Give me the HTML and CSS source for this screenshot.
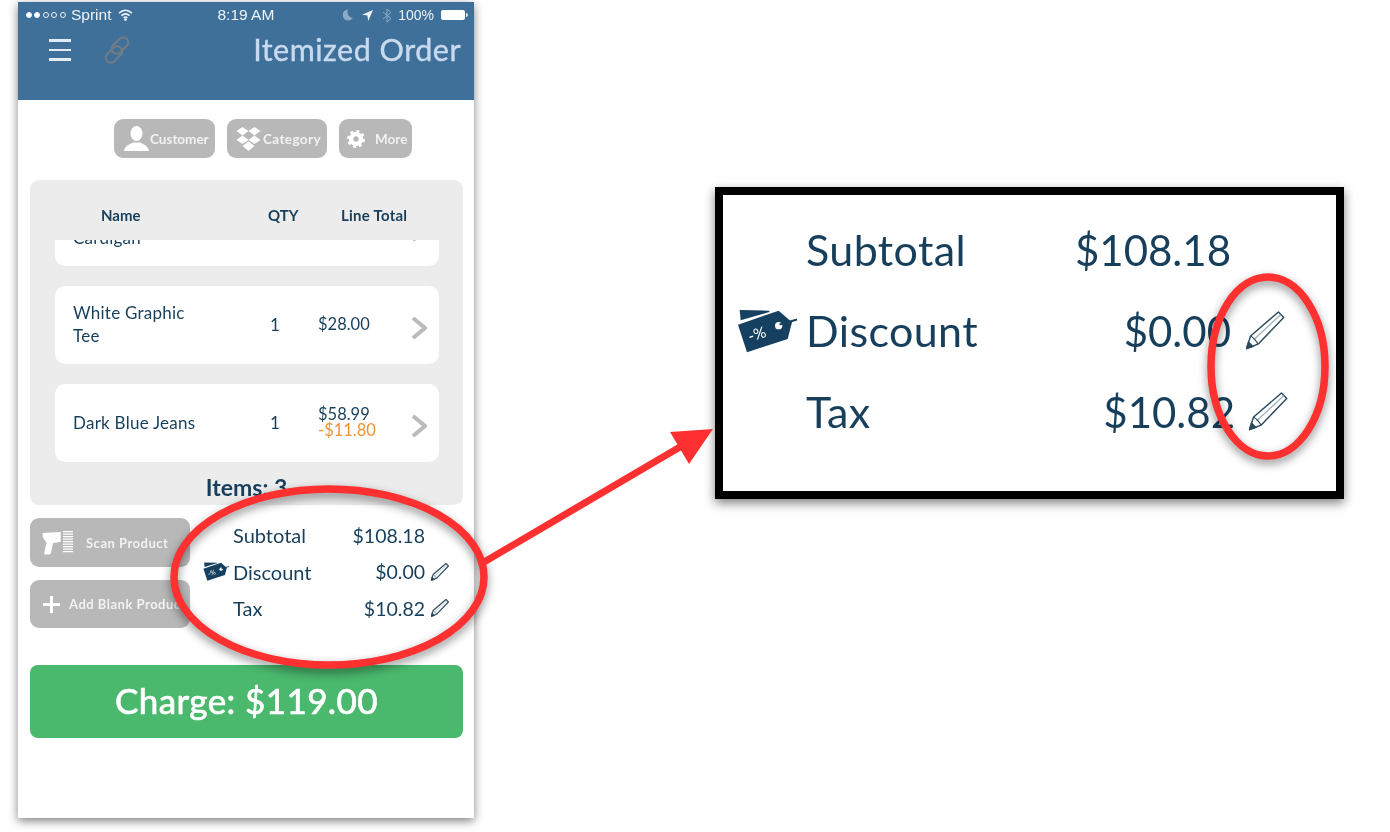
FILE: index.html
```html
<!DOCTYPE html>
<html lang="en">
<head>
    <meta charset="UTF-8">
    <title>Itemized Order</title>
    <link rel="stylesheet" href="styles.css">
</head>
<body>
    <svg class="defs" width="0" height="0">
        <symbol id="tag" viewBox="110 400 180 132">
            <path d="M118 403 L207 405 L207 409 L121 434 Z" fill="#16405f"/>
            <path d="M113 447 L235 405 L275 440 L262 490 L140 530 Z" fill="#16405f"/>
            <circle cx="235" cy="450" r="11" fill="#fff"/>
            <path d="M240 446 L288 432" stroke="#16405f" stroke-width="6" stroke-linecap="round"/>
            <text x="143" y="490" transform="rotate(-18 175 475)" font-family="Lato, sans-serif" font-size="46" fill="#fff">-%</text>
        </symbol>
        <symbol id="pencil" viewBox="0 0 40 40">
            <path d="M0.5 38.5 L4.7 25.7 L33.3 1 L38.7 6.7 L12.3 34 Z" fill="#fff" stroke="#2d4b5e" stroke-linejoin="round"/>
            <path d="M8 29.5 L35.5 3.8" stroke="#9fb0ba" stroke-width="1.3"/>
            <path d="M4.7 25.7 C7 27 10 30 12.3 34" fill="none" stroke="#2d4b5e" stroke-width="1.2"/>
            <path d="M0.5 38.5 L2.6 32 L7 36.4 Z" fill="#2d4b5e" stroke="#2d4b5e"/>
        </symbol>
        <symbol id="chevron" viewBox="0 0 16 24">
            <path d="M2 2 L14 12 L2 22" fill="none" stroke="#bbb" stroke-width="4"/>
        </symbol>
    </svg>

    <div class="phone">
        <header class="header">
            <div class="status">
                <div class="status-left">
                    <span class="dot on"></span><span class="dot on"></span><span class="dot"></span><span class="dot"></span><span class="dot"></span>
                    <span class="carrier">Sprint</span>
                    <svg width="15" height="12" viewBox="0 0 15 12" fill="none" stroke="#eef3f8" stroke-width="1.6">
                        <path d="M1 4.3 C5 0.4 10 0.4 14 4.3"/>
                        <path d="M3.4 6.7 C6 4.3 9 4.3 11.6 6.7"/>
                        <path d="M5.6 8.9 C6.8 7.8 8.2 7.8 9.4 8.9"/>
                        <circle cx="7.5" cy="10.6" r="0.6" fill="#eef3f8"/>
                    </svg>
                </div>
                <div class="status-time">8:19 AM</div>
                <div class="status-right">
                    <svg class="dim" width="10" height="12" viewBox="0 0 10 12"><path d="M5 0.5 A5.5 5.5 0 1 0 9.8 9 A6 6 0 0 1 5 0.5 Z" fill="#eef3f8"/></svg>
                    <svg width="11" height="11" viewBox="0 0 11 11"><path d="M11 0 L0 4.8 L5.4 5.6 L6.2 11 Z" fill="#eef3f8"/></svg>
                    <svg class="dim" width="10" height="15" viewBox="0 0 10 15" fill="none" stroke="#eef3f8" stroke-width="1"><path d="M1 4 L9 10.5 L5 14 L5 1 L9 4.5 L1 11"/></svg>
                    <span class="battery-text">100%</span>
                    <span class="battery"></span>
                </div>
            </div>
            <div class="nav">
                <span class="burger"><i></i><i></i><i></i></span>
                <svg class="chain" width="30" height="30" viewBox="0 0 30 30" fill="none" stroke="#6f7c85" stroke-width="2.2">
                    <rect x="13" y="1" width="10" height="19" rx="5" transform="rotate(45 18 10.5)"/>
                    <rect x="7" y="10" width="10" height="19" rx="5" transform="rotate(45 12 19.5)"/>
                </svg>
                <h1 class="title">Itemized Order</h1>
            </div>
        </header>

        <div class="tools">
            <div class="tool tool-customer">
                <svg width="25" height="25" viewBox="0 0 25 25" fill="#fff">
                    <ellipse cx="12.5" cy="7.5" rx="6" ry="7.5"/>
                    <path d="M0 25 C1 19 6 18.5 9 16.5 L16 16.5 C19 18.5 24 19 25 25 Z"/>
                </svg>
                <span>Customer</span>
            </div>
            <div class="tool tool-category">
                <svg width="25" height="24" viewBox="0 0 25 24" fill="#fff">
                    <path d="M6.5 0 L12.5 4 L6.5 8.5 L0.5 4 Z"/>
                    <path d="M18.5 0 L24.5 4 L18.5 8.5 L12.5 4 Z"/>
                    <path d="M6.5 8.5 L12.5 13 L6.5 17 L0.5 13 Z"/>
                    <path d="M18.5 8.5 L24.5 13 L18.5 17 L12.5 13 Z"/>
                    <path d="M12.5 14.5 L18.5 19 L12.5 24 L6.5 19 Z"/>
                </svg>
                <span>Category</span>
            </div>
            <div class="tool tool-more">
                <svg width="18" height="18" viewBox="0 0 20 20">
                    <circle cx="10" cy="10" r="8.2" fill="none" stroke="#fff" stroke-width="3.6" stroke-dasharray="3.2 3.24"/>
                    <circle cx="10" cy="10" r="5.5" fill="none" stroke="#fff" stroke-width="5"/>
                </svg>
                <span>More</span>
            </div>
        </div>

        <section class="panel">
            <div class="panel-head">
                <span class="head-name">Name</span>
                <span class="head-qty">QTY</span>
                <span class="head-total">Line Total</span>
            </div>
            <div class="list">
                <div class="item item-scrolled">
                    <div class="item-name">&nbsp;<br>Cardigan</div>
                    <div></div>
                    <div></div>
                    <div></div>
                    <svg class="chevron"><use href="#chevron"/></svg>
                </div>
                <div class="item">
                    <div class="item-name">White Graphic<br>Tee</div>
                    <div class="item-qty">1</div>
                    <div></div>
                    <div class="item-price">$28.00</div>
                    <svg class="chevron"><use href="#chevron"/></svg>
                </div>
                <div class="item">
                    <div class="item-name">Dark Blue Jeans</div>
                    <div class="item-qty">1</div>
                    <div></div>
                    <div class="item-price item-price-stack">$58.99<span class="item-off">-$11.80</span></div>
                    <svg class="chevron"><use href="#chevron"/></svg>
                </div>
            </div>
            <div class="count">Items: 3</div>
        </section>

        <div class="actions">
            <div class="action-btns">
                <div class="action">
                    <svg class="scan-icon" width="31" height="24" viewBox="0 0 31 24" fill="#fff">
                        <path d="M0.7 2 L18.7 1 L18.7 11 L11 12 L9 22 Q8.5 23.5 6 23.5 L3.5 23.5 Q2 23.5 2.2 22 L4.5 12 L0.7 6 Z"/>
                        <path d="M21 0h10v1.3H21zM21 2.5h10v1.3H21zM21 5h10v1.3H21zM21 7.5h10v1.3H21zM21 10h10v1.3H21zM21 12.500h10v1.300H21zM21 15h10v1.300H21zM21 17.500h10v1.300H21zM21 20h10v1.300H21z"/>
                    </svg>
                    <span class="scan-label">Scan Product</span>
                </div>
                <div class="action action-add">
                    <svg class="plus-icon" width="17" height="17" viewBox="0 0 17 17" fill="#fff"><path d="M7 0h3v7h7v3h-7v7H7v-7H0V7h7z"/></svg>
                    <span class="add-label">Add Blank Product</span>
                </div>
            </div>
            <div class="totals">
                <span></span><span class="lbl">Subtotal</span><span class="val">$108.18</span><span></span>
                <svg class="tag"><use href="#tag"/></svg><span class="lbl">Discount</span><span class="val">$0.00</span><svg class="pencil"><use href="#pencil"/></svg>
                <span></span><span class="lbl">Tax</span><span class="val">$10.82</span><svg class="pencil"><use href="#pencil"/></svg>
            </div>
        </div>

        <div class="charge">Charge: $119.00</div>
    </div>

    <div class="zoom-box">
        <div class="totals totals-big">
            <span></span><span class="lbl">Subtotal</span><span class="val">$108.18</span><span></span>
            <svg class="tag"><use href="#tag"/></svg><span class="lbl">Discount</span><span class="val">$0.00</span><svg class="pencil"><use href="#pencil"/></svg>
            <span></span><span class="lbl">Tax</span><span class="val val-tax">$10.82</span><svg class="pencil pencil-tax"><use href="#pencil"/></svg>
        </div>
    </div>

    <svg class="marks" width="1390" height="832" viewBox="0 0 1390 832">
        <ellipse class="ring" cx="329" cy="577" rx="155" ry="88"/>
        <ellipse class="ring" cx="1268" cy="366.5" rx="57" ry="89.5"/>
        <path d="M479 565 L680 447" stroke="#fe3030" stroke-width="7"/>
        <path d="M713 429 L670 432 L689 464 Z" fill="#fe3030"/>
    </svg>
</body>
</html>
```

FILE: styles.css
```css
body {
    margin: 0;
    width: 1390px;
    height: 832px;
    position: relative;
    overflow: hidden;
    background: #fff;
    font-family: Lato, sans-serif;
    color: #173f5c;
}
.defs {
    position: absolute;
}
.phone {
    width: 456px;
    height: 816px;
    margin: 2px 0 0 18px;
    float: left;
    background: #fff;
    box-shadow: 0 3px 9px rgba(0, 0, 0, 0.5);
    filter: blur(0.35px);
}

/* header */
.header {
    height: 98px;
    background: #3e709a;
}
.status {
    height: 26px;
    display: grid;
    grid-template-columns: 1fr auto 1fr;
    align-items: center;
    padding: 0 8px;
    font-family: "Liberation Sans", sans-serif;
    font-size: 14px;
    color: #eef3f8;
}
.status-left {
    display: flex;
    align-items: center;
}
.dot {
    width: 6px;
    height: 6px;
    margin-right: 2.400px;
    box-sizing: border-box;
    border: 1px solid #eef3f8;
    border-radius: 50%;
}
.dot.on {
    background: #fff;
}
.carrier {
    margin: 0 7px 0 3px;
    font-size: 15.5px;
}
.status-time {
    width: 60px;
    font-size: 15.5px;
    white-space: nowrap;
    margin-left: 3px;
}
.status-right {
    display: flex;
    align-items: center;
    justify-content: flex-end;
    gap: 9px;
}
.dim {
    opacity: 0.45;
}
.battery-text {
    margin-left: -3px;
    margin-right: -2px;
}
.battery {
    width: 24px;
    height: 10px;
    background: #fff;
    border-radius: 2px;
    margin-right: 1px;
    position: relative;
}
.battery::after {
    content: "";
    position: absolute;
    right: -3px;
    top: 3px;
    width: 2px;
    height: 4px;
    background: #dfe7ee;
    border-radius: 0 2px 2px 0;
}
.nav {
    height: 44px;
    display: flex;
    align-items: center;
    padding: 0 13px 0 31px;
}
.burger {
    width: 22px;
    display: flex;
    flex-direction: column;
    gap: 7px;
}
.burger i {
    height: 2.5px;
    background: #e3ecf5;
}
.chain {
    margin-left: 31px;
}
.title {
    margin: 0 0 3px auto;
    font-size: 30.5px;
    font-weight: 400;
    letter-spacing: 0.5px;
    -webkit-text-stroke: 0.4px #c9daef;
    color: #c9daef;
}

/* top buttons */
.tools {
    display: flex;
    gap: 12px;
    height: 39px;
    margin-top: 19px;
    padding-left: 96px;
}
.tool {
    height: 39px;
    background: #b8b8b8;
    border-radius: 9px;
    display: flex;
    align-items: center;
    color: #f2f2f2;
    font-size: 13.5px;
    font-weight: 700;
    white-space: nowrap;
}
.tool-customer {
    width: 101px;
    padding-left: 10px;
    gap: 1px;
    box-sizing: border-box;
}
.tool-category {
    width: 100px;
    padding-left: 9px;
    gap: 2px;
    box-sizing: border-box;
    letter-spacing: 0.4px;
}
.tool-more {
    width: 73px;
    padding-left: 8px;
    gap: 10px;
    box-sizing: border-box;
}

/* items panel */
.panel {
    height: 325px;
    margin: 22px 11px 0 12px;
    background: #ececec;
    border-radius: 9px;
}
.panel-head {
    height: 60px;
    display: flex;
    align-items: center;
    padding-top: 10px;
    box-sizing: border-box;
    font-size: 15px;
    font-weight: 700;
}
.head-name {
    width: 167px;
    padding-left: 71px;
}
.head-qty {
    width: 73px;
}
.head-total {
    letter-spacing: 0.25px;
}
.list {
    height: 222px;
    margin: 0 24px 0 25px;
    overflow: hidden;
}
.item {
    height: 78px;
    margin-bottom: 20px;
    background: #fff;
    border-radius: 10px;
    display: grid;
    grid-template-columns: 192px 20px 33px 93px 16px;
    align-items: center;
    padding: 0 0 2px 18px;
    box-sizing: border-box;
    font-size: 17px;
    line-height: 23px;
    letter-spacing: 0.25px;
}
.item-scrolled {
    margin-top: -52px;
}
.item-qty {
    text-align: center;
}
.item-price {
    font-size: 16.5px;
    letter-spacing: 0;
}
.item-price-stack {
    line-height: 16px;
}
.item-off {
    display: block;
    color: #ef9433;
}
.chevron {
    width: 16px;
    height: 24px;
    margin-top: 8px;
}
.count {
    padding-top: 12px;
    text-align: center;
    font-size: 23px;
    font-weight: 700;
    line-height: 26px;
}

/* scan buttons + totals */
.actions {
    display: flex;
    height: 110px;
    margin: 13px 0 0 12px;
}
.action-btns {
    width: 160px;
    display: flex;
    flex-direction: column;
    gap: 13px;
}
.action {
    height: 49px;
    background: #b8b8b8;
    border-radius: 9px;
    display: flex;
    align-items: center;
    overflow: hidden;
    white-space: nowrap;
    color: #f2f2f2;
    font-size: 13px;
    font-weight: 700;
    letter-spacing: 0.5px;
}
.action-add {
    height: 48px;
}
.scan-icon {
    margin-left: 12px;
    flex: none;
}
.scan-label {
    margin-left: 13px;
}
.plus-icon {
    margin-left: 13px;
    flex: none;
}
.add-label {
    margin-left: 9px;
}
.totals {
    width: 246px;
    height: 110px;
    margin: -1px 0 0 13px;
    display: grid;
    grid-template-columns: 30px 1fr auto 24px;
    grid-auto-rows: 36.5px;
    align-items: center;
    font-size: 20px;
}
.val {
    justify-self: end;
    font-size: 19.5px;
}
.tag {
    width: 26px;
    height: 21px;
}
.pencil {
    width: 18px;
    height: 18px;
    justify-self: end;
    stroke-width: 2.6;
}
.charge {
    height: 73px;
    margin: 37px 11px 0 12px;
    padding-bottom: 4px;
    box-sizing: border-box;
    background: #4ab86d;
    border-radius: 8px;
    display: flex;
    align-items: center;
    justify-content: center;
    color: #fff;
    font-size: 35px;
    letter-spacing: 0.4px;
    -webkit-text-stroke: 0.7px #fff;
}

/* zoomed call-out */
.zoom-box {
    position: absolute;
    left: 715px;
    top: 187px;
    width: 629px;
    height: 312px;
    box-sizing: border-box;
    border: 8px solid #000;
    background: #fff;
    padding: 14px 51px 0 15px;
    box-shadow: 0 4px 10px rgba(0, 0, 0, 0.5);
}
.totals-big {
    width: auto;
    height: auto;
    margin: 0;
    grid-template-columns: 68px 1fr auto 54px;
    grid-auto-rows: 81px;
    filter: blur(0.6px);
}
.totals-big .lbl {
    font-size: 43px;
    letter-spacing: 0.4px;
}
.totals-big .val {
    font-size: 42px;
}
.totals-big .tag {
    width: 60px;
    height: 44px;
    margin-left: -1px;
}
.totals-big .pencil {
    width: 39px;
    height: 39px;
    stroke-width: 1.5;
}
.val-tax {
    margin-right: -4px;
}
.totals-big .pencil-tax {
    margin-right: -3px;
}

/* red annotations */
.marks {
    position: absolute;
    left: 0;
    top: 0;
    pointer-events: none;
}
.ring {
    fill: none;
    stroke: #fe3030;
    stroke-width: 7.5;
    filter: drop-shadow(0 4px 5px rgba(0, 0, 0, 0.45));
}
```
